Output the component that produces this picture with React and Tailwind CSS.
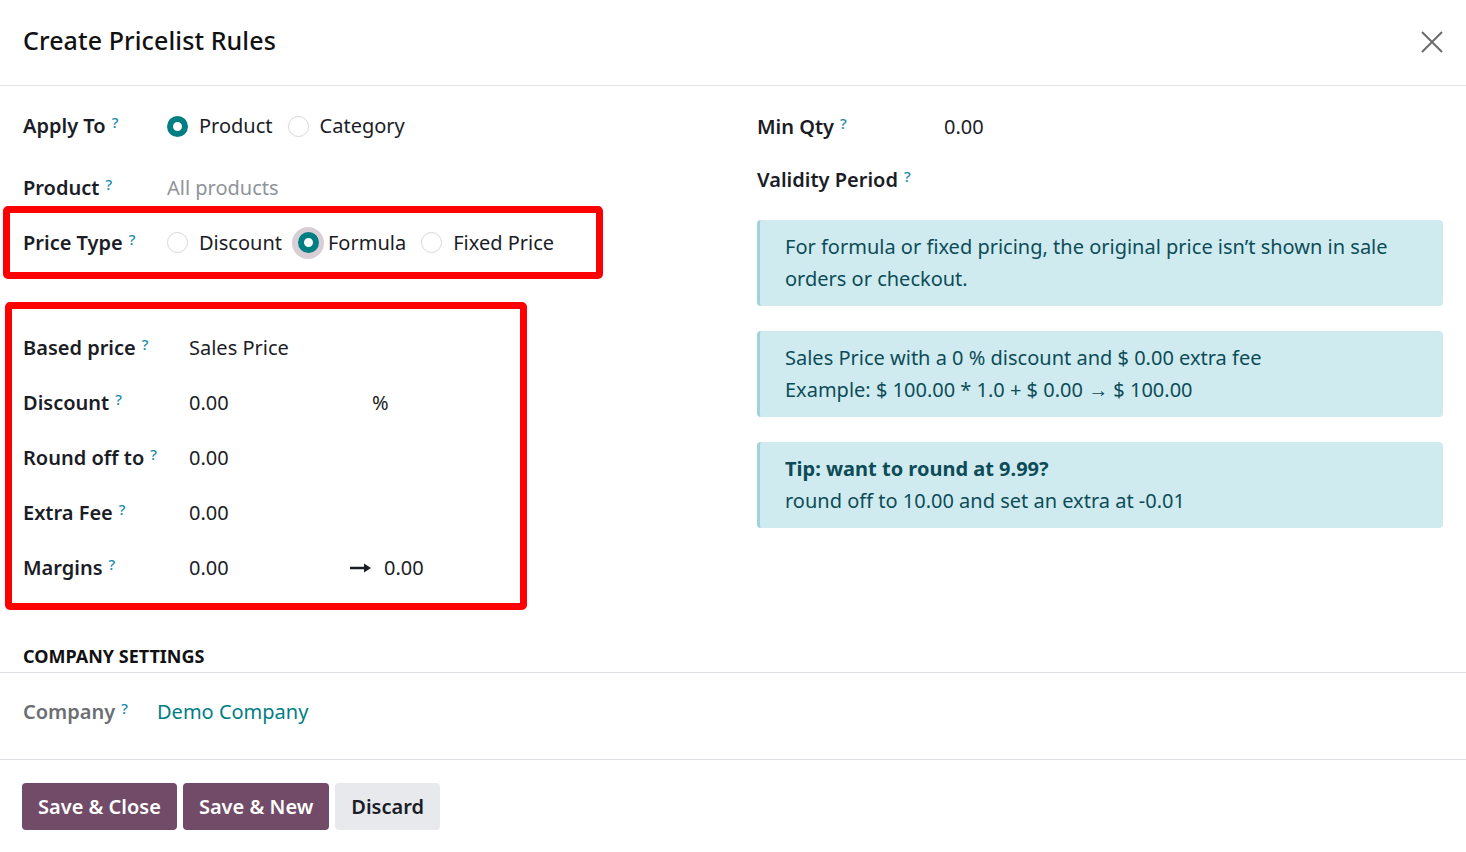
import React from "react";

const Q = () => (
  <sup className="ml-[6px] text-[15px] font-medium text-[#1a8aad] relative top-[-5px]">?</sup>
);

const Radio = ({ checked, focus }) => (
  <span className={"relative inline-flex items-center justify-center w-[21px] h-[21px] shrink-0"}>
    {focus && <span className="absolute w-[32px] h-[32px] rounded-full bg-[#d9cdd6]" />}
    {checked ? (
      <span className="relative w-[21px] h-[21px] rounded-full border-[6px] border-[#017e84] bg-white" />
    ) : (
      <span className="relative w-[21px] h-[21px] rounded-full border border-[#d5d8dc] bg-white" />
    )}
  </span>
);

const Label = ({ children, w, gray }) => (
  <div className={`${w} shrink-0 font-semibold ${gray ? "text-[#6b6f75]" : "text-[#1b1d26]"}`}>
    {children}
    <Q />
  </div>
);

export default function App() {
  return (
    <div
      className="w-[1466px] h-[852px] bg-white text-[#1b1d26] text-[20px] overflow-hidden"
      style={{ fontFamily: '"Noto Sans", "Open Sans", sans-serif' }}
    >
      {/* Header */}
      <div className="h-[86px] border-b border-[#dee2e6] flex items-center justify-between pl-[23px] pr-[22px]">
        <h1 className="text-[25px] font-medium tracking-[0.1px] text-[#111] pb-[3px]">Create Pricelist Rules</h1>
        <svg width="24" height="24" viewBox="0 0 24 24" className="mb-[2px]">
          <path d="M2 2 L22 22 M22 2 L2 22" stroke="#6b6b6b" strokeWidth="2" />
        </svg>
      </div>

      {/* Body */}
      <div className="flex">
        {/* Left column */}
        <div className="w-[734px] shrink-0">
          <div className="pl-[23px] flex items-center h-[44px] mt-[18px]">
            <Label w="w-[144px]">Apply To</Label>
            <div className="flex items-center">
              <Radio checked />
              <span className="ml-[11px]">Product</span>
              <span className="ml-[15px] flex items-center"><Radio /></span>
              <span className="ml-[11px]">Category</span>
            </div>
          </div>
          <div className="pl-[23px] flex items-center h-[36px] mt-[22px]">
            <Label w="w-[144px]">Product</Label>
            <span className="text-[#8f939a]">All products</span>
          </div>

          {/* Red box 1 */}
          <div className="ml-[3px] w-[600px] h-[73px] border-[7px] border-[#ff0000] rounded-[5px] flex items-center pl-[13px]">
            <Label w="w-[144px]">Price Type</Label>
            <div className="flex items-center">
              <Radio />
              <span className="ml-[11px]">Discount</span>
              <span className="ml-[16px] flex items-center"><Radio checked focus /></span>
              <span className="ml-[9px]">Formula</span>
              <span className="ml-[15px] flex items-center"><Radio /></span>
              <span className="ml-[11px]">Fixed Price</span>
            </div>
          </div>

          {/* Red box 2 */}
          <div className="ml-[5px] mt-[23px] w-[522px] h-[308px] border-[7px] border-[#ff0000] rounded-[5px] pl-[11px] pt-[11px]">
            {[
              ["Based price", "Sales Price", null],
              ["Discount", "0.00", "pct"],
              ["Round off to", "0.00", null],
              ["Extra Fee", "0.00", null],
              ["Margins", "0.00", "arrow"],
            ].map(([l, v, extra]) => (
              <div key={l} className="flex items-center h-[55px]">
                <Label w="w-[166px]">{l}</Label>
                <span className="w-[161px]">{v}</span>
                {extra === "pct" && <span className="ml-[22px]">%</span>}
                {extra === "arrow" && (
                  <span className="flex items-center">
                    <svg width="22" height="12" viewBox="0 0 22 12">
                      <path d="M0 6 H17" stroke="#1b1d26" strokeWidth="2.5" />
                      <path d="M14 1.5 L21 6 L14 10.5 Z" fill="#1b1d26" />
                    </svg>
                    <span className="ml-[12px]">0.00</span>
                  </span>
                )}
              </div>
            ))}
          </div>
        </div>

        {/* Right column */}
        <div className="pl-[23px] pr-[23px] flex-1">
          <div className="flex items-center h-[44px] mt-[19px]">
            <Label w="w-[187px]">Min Qty</Label>
            <span>0.00</span>
          </div>
          <div className="flex items-center h-[44px] mt-[9px]">
            <Label w="w-[187px]">Validity Period</Label>
          </div>
          <div className="mt-[18px] flex flex-col gap-[25px]">
            <div className="h-[86px] rounded-[4px] bg-[#cfebf0] border-l-[3px] border-[#9ed2dc] text-[#0d4c57] pl-[25px] pr-[20px] pt-[11px] leading-[32px]">
              For formula or fixed pricing, the original price isn’t shown in sale orders or checkout.
            </div>
            <div className="h-[86px] rounded-[4px] bg-[#cfebf0] border-l-[3px] border-[#9ed2dc] text-[#0d4c57] pl-[25px] pr-[20px] pt-[11px] leading-[32px]">
              <div>Sales Price with a 0 % discount and $ 0.00 extra fee</div>
              <div>Example: $ 100.00 * 1.0 + $ 0.00 → $ 100.00</div>
            </div>
            <div className="h-[86px] rounded-[4px] bg-[#cfebf0] border-l-[3px] border-[#9ed2dc] text-[#0d4c57] pl-[25px] pr-[20px] pt-[11px] leading-[32px]">
              <div className="font-bold">Tip: want to round at 9.99?</div>
              <div>round off to 10.00 and set an extra at -0.01</div>
            </div>
          </div>
        </div>
      </div>

      {/* Company settings */}
      <div className="mt-[31px] border-b border-[#dee2e6] h-[32px] pl-[23px] flex items-start">
        <div className="text-[18px] font-bold uppercase text-[#111] leading-[22px] mt-[4px]">Company Settings</div>
      </div>
      <div className="h-[87px] border-b border-[#dee2e6] pl-[23px] flex items-center pb-[8px]">
        <Label w="w-[134px]" gray>Company</Label>
        <span className="text-[#017e84]">Demo Company</span>
      </div>

      {/* Footer */}
      <div className="pl-[22px] pt-[23px] flex gap-[6px]">
        <button className="h-[47px] px-[16px] rounded-[4px] bg-[#714b67] text-white font-semibold">Save &amp; Close</button>
        <button className="h-[47px] px-[16px] rounded-[4px] bg-[#714b67] text-white font-semibold">Save &amp; New</button>
        <button className="h-[47px] px-[16px] rounded-[4px] bg-[#e7e9ed] text-[#1b1d26] font-semibold">Discard</button>
      </div>
    </div>
  );
}
